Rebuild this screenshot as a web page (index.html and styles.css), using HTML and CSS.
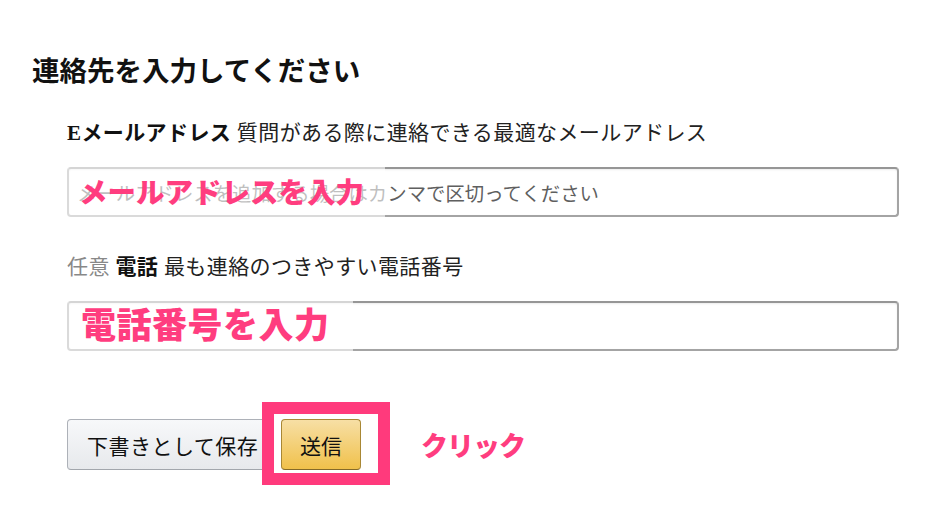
FILE: index.html
```html
<!DOCTYPE html>
<html lang="ja">
<head>
<meta charset="utf-8">
<title>連絡先を入力してください</title>
<link rel="stylesheet" href="styles.css">
</head>
<body>
<main class="page">
  <h2 class="title">連絡先を入力してください</h2>
  <div class="form">
    <div class="field">
      <div class="label"><b>Eメールアドレス</b> 質問がある際に連絡できる最適なメールアドレス</div>
      <div class="input-wrap">
        <input class="input" type="text" placeholder="メールアドレスを追加する場合はカンマで区切ってください">
        <div class="note note-email">メールアドレスを入力</div>
      </div>
    </div>
    <div class="field field-phone">
      <div class="label"><span class="opt">任意</span> <b>電話</b> 最も連絡のつきやすい電話番号</div>
      <div class="input-wrap">
        <input class="input" type="text">
        <div class="note note-phone">電話番号を入力</div>
      </div>
    </div>
    <div class="actions">
      <button class="btn btn-draft" type="button">下書きとして保存</button>
      <div class="submit-wrap">
        <div class="frame"></div>
        <button class="btn btn-submit" type="button">送信</button>
      </div>
      <span class="click-note">クリック</span>
    </div>
  </div>
</main>
</body>
</html>
```
FILE: styles.css
```css
* { box-sizing: border-box; }
html, body { height: 100%; }
body {
  margin: 0;
  background: #fff;
  color: #111;
  font-family: "Liberation Serif", "Noto Sans CJK JP", serif;
}
.page {
  min-height: 100%;
  padding: 55px 50px 61px 32px;
}
.title {
  margin: 0;
  font-size: 27.5px;
  line-height: 34px;
  font-weight: 700;
  color: #111;
}
.form {
  margin-left: 35px;
  margin-top: 29px;
  display: flex;
  flex-direction: column;
}
.field {
  display: flex;
  flex-direction: column;
  gap: 19px;
}
.field-phone {
  margin-top: 35px;
}
.label {
  font-size: 21px;
  line-height: 30px;
  color: #222;
  letter-spacing: 0.4px;
}
.label b { font-weight: 700; color: #111; }
.opt { color: #888; }
.input-wrap {
  position: relative;
  height: 50px;
}
.input {
  display: block;
  width: 100%;
  height: 50px;
  border: 2px solid #a4a4a4;
  border-top-color: #969696;
  border-radius: 4px;
  box-shadow: inset 0 1px 2px rgba(0,0,0,0.08);
  padding: 0 8px;
  font-family: "Noto Sans CJK JP", sans-serif;
  font-size: 19.4px;
  color: #333;
  background: #fff;
  outline: none;
}
.input::placeholder { color: #5f5f5f; }
.note {
  position: absolute;
  left: 0;
  top: 0;
  bottom: 0;
  display: flex;
  align-items: center;
  background: rgba(255,255,255,0.6);
  color: #ff3d7f;
  font-family: "Noto Sans CJK JP", sans-serif;
  font-weight: 900;
  white-space: nowrap;
}
.note-email {
  width: 318px;
  padding-left: 12px;
  font-size: 28.5px;
  padding-bottom: 4px;
}
.note-phone {
  width: 286px;
  padding-left: 14px;
  font-size: 35px;
  letter-spacing: 0.5px;
  padding-bottom: 8px;
}
.actions {
  margin-top: 68px;
  display: flex;
  align-items: center;
  height: 51px;
}
.btn {
  height: 51px;
  border-radius: 4px;
  font-family: "Noto Sans CJK JP", sans-serif;
  font-size: 21px;
  color: #111;
  cursor: pointer;
  padding: 0;
  margin: 0;
}
.btn-draft {
  width: 212px;
  background: linear-gradient(#f7f8fa, #e7e9ec);
  border: 1px solid #adb1b8;
  border-bottom-color: #a2a6ac;
  text-align: left;
  padding-left: 19px;
  letter-spacing: 0.5px;
}
.submit-wrap {
  position: relative;
  margin-left: 2px;
  width: 80px;
  height: 51px;
}
.frame {
  position: absolute;
  left: -19px;
  top: -17px;
  width: 128px;
  height: 83px;
  border: 12.5px solid #ff3a7c;
  background: #fff;
  z-index: 1;
}
.btn-submit {
  position: relative;
  z-index: 2;
  display: block;
  width: 80px;
  background: linear-gradient(#f7dfa5, #f0c14b);
  border: 1px solid #a88734;
  border-bottom-color: #846a29;
}
.click-note {
  margin-left: 60px;
  color: #ff3d7f;
  font-family: "Noto Sans CJK JP", sans-serif;
  font-weight: 900;
  font-size: 27px;
  letter-spacing: -1px;
  line-height: 1;
}
```
